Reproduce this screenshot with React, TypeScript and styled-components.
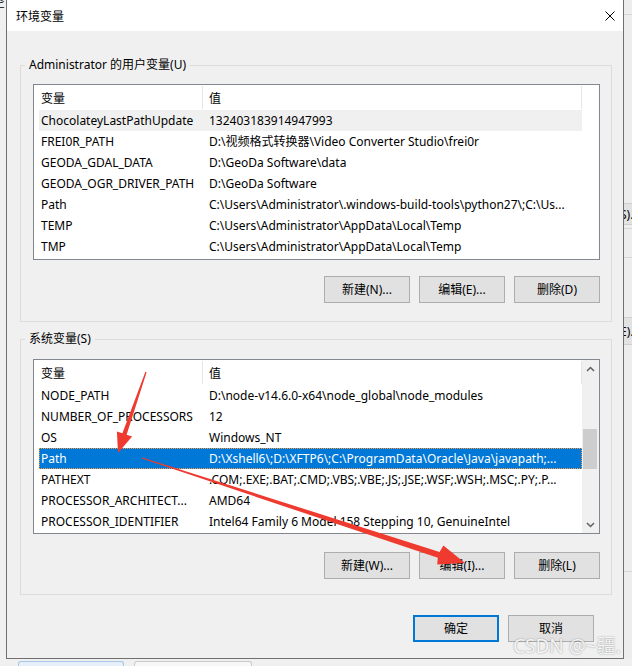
import React from 'react';
import styled, { createGlobalStyle, css } from 'styled-components';

const UI_FONT = `"Noto Sans", "Noto Sans CJK SC", sans-serif`;

const GlobalStyle = createGlobalStyle`
  html, body { margin: 0; padding: 0; background: #f0f0f0; }
  body { font-family: ${UI_FONT}; font-size: 12px; color: #000; }
  *, *::before, *::after { box-sizing: border-box; }
`;

const Screen = styled.div`
  position: relative;
  width: 632px;
  height: 666px;
  overflow: hidden;
  display: grid;
  grid-template-columns: 6px 618px 8px;
  grid-template-rows: 659px 7px;
  background: #f0f0f0;
`;

const LeftStrip = styled.div`
  grid-column: 1;
  grid-row: 1;
  overflow: hidden;
  background: #f0f0f0;
`;

const BgGlyph = styled.span`
  display: block;
  margin: -5px 0 0 -7px;
  font-size: 12px;
  line-height: 16px;
  color: #000;
`;

const RightStrip = styled.div`
  grid-column: 3;
  grid-row: 1;
  overflow: hidden;
  display: flex;
  flex-direction: column;
  background: #ededed;
`;

const BgFragment = styled.div<{ $mt: number; $h: number }>`
  margin-top: ${(p) => p.$mt}px;
  height: ${(p) => p.$h}px;
  flex: none;
  border-top: 1px solid #cfcfcf;
  border-bottom: 1px solid #cfcfcf;
  background: #e2e2e2;
  display: flex;
  align-items: center;
  white-space: nowrap;
  font-size: 12px;
  text-indent: -4px;
`;

const BgLine = styled.div<{ $mt: number }>`
  margin-top: ${(p) => p.$mt}px;
  height: 1px;
  flex: none;
  background: #d6d6d6;
`;

const BottomStrip = styled.div`
  grid-column: 1 / 4;
  grid-row: 2;
  display: flex;
  align-items: flex-end;
  gap: 10px;
  padding-left: 18px;
  background: #f0f0f0;
`;

const BgTab = styled.div<{ $w: number; $active?: boolean }>`
  width: ${(p) => p.$w}px;
  height: 5px;
  border: 1px solid ${(p) => (p.$active ? '#a8c6e4' : '#cacaca')};
  border-bottom: none;
  border-radius: 3px 3px 0 0;
  background: ${(p) => (p.$active ? '#e6f0fa' : '#f7f7f7')};
`;

const Dialog = styled.div`
  grid-column: 2;
  grid-row: 1;
  display: flex;
  flex-direction: column;
  border: 1px solid #707070;
  border-top: none;
  background: #f0f0f0;
`;

const TitleBar = styled.div`
  height: 31px;
  flex: none;
  background: #fff;
  display: flex;
  align-items: center;
  justify-content: space-between;
  padding: 0 8px 0 9px;
  font-size: 12px;
`;

const DialogBody = styled.div`
  flex: 1;
  display: flex;
  flex-direction: column;
  padding: 26px 11px 16px 13px;
`;

const GroupBox = styled.fieldset<{ $mt: number }>`
  margin: ${(p) => p.$mt}px 0 0 0;
  padding: 0;
  border: 1px solid #dcdcdc;
  min-width: 0;
`;

const GroupLegend = styled.legend`
  margin-left: 4px;
  padding: 0 4px;
  font-size: 12px;
  line-height: 16px;
  color: #000;
`;

const GroupInner = styled.div<{ $pt: number; $pb: number }>`
  padding: ${(p) => p.$pt}px 11px ${(p) => p.$pb}px 12px;
  display: flex;
  flex-direction: column;
`;

const ListView = styled.div<{ $h: number }>`
  height: ${(p) => p.$h}px;
  flex: none;
  border: 1px solid #828790;
  background: #fff;
  display: flex;
  overflow: hidden;
`;

const ListContent = styled.div`
  flex: 1;
  min-width: 0;
  display: flex;
  flex-direction: column;
`;

const HeaderRow = styled.div`
  display: flex;
  height: 25px;
  flex: none;
`;

const HeaderCell = styled.div<{ $w: number; $pl: number }>`
  width: ${(p) => p.$w}px;
  padding-left: ${(p) => p.$pl}px;
  display: flex;
  align-items: center;
  border-right: 1px solid #e5e5e5;
  margin: 1px 0;
  white-space: nowrap;
`;

type RowState = 'normal' | 'inactive' | 'selected';

const Row = styled.div<{ $state: RowState }>`
  display: grid;
  grid-template-columns: 164px 379px;
  width: 543px;
  height: 21px;
  flex: none;
  margin-left: 5px;
  align-items: center;
  ${(p) =>
    p.$state === 'inactive' &&
    css`
      background: #f0f0f0;
    `}
  ${(p) =>
    p.$state === 'selected' &&
    css`
      background: #0078d7;
      color: #fff;
      outline: 1px dotted #ff9a3c;
      outline-offset: -1px;
    `}
`;

const Cell = styled.div<{ $pl: number }>`
  padding-left: ${(p) => p.$pl}px;
  white-space: nowrap;
  overflow: hidden;
  line-height: 16px;
`;

const VScroll = styled.div`
  width: 17px;
  flex: none;
  background: #f0f0f0;
  display: flex;
  flex-direction: column;
`;

const ScrollArrow = styled.div`
  height: 17px;
  flex: none;
  display: flex;
  align-items: center;
  justify-content: center;
`;

const ScrollTrack = styled.div`
  flex: 1;
  display: flex;
  flex-direction: column;
  padding: 0 2px 0 1px;
`;

const ScrollThumb = styled.div`
  flex: none;
  background: #cdcdcd;
`;

const ButtonRow = styled.div<{ $mt: number; $pr?: number }>`
  display: flex;
  justify-content: flex-end;
  gap: 9px;
  margin-top: ${(p) => p.$mt}px;
  padding-right: ${(p) => p.$pr ?? 0}px;
`;

const PushButton = styled.button<{ $default?: boolean }>`
  width: 86px;
  height: 27px;
  padding: 0;
  margin: 0;
  font-family: ${UI_FONT};
  font-size: 12px;
  line-height: 16px;
  color: #000;
  background: #e1e1e1;
  border: 1px solid #adadad;
  border-radius: 0;
  ${(p) =>
    p.$default &&
    css`
      border: 2px solid #0078d7;
    `}
`;

const Annotations = styled.svg`
  position: absolute;
  left: 0;
  top: 0;
  width: 632px;
  height: 666px;
  pointer-events: none;
`;

const Watermark = styled.div`
  position: absolute;
  left: 513px;
  top: 634px;
  font-family: ${UI_FONT};
  font-size: 19px;
  line-height: 24px;
  white-space: nowrap;
  color: rgba(255, 255, 255, 0.92);
  text-shadow: 0 0 1.5px rgba(70, 70, 70, 0.65);
  pointer-events: none;
`;

type Item = { name: string; value: string; state?: RowState };

const userVars: Item[] = [
  { name: 'ChocolateyLastPathUpdate', value: '132403183914947993', state: 'inactive' },
  { name: 'FREI0R_PATH', value: String.raw`D:\视频格式转换器\Video Converter Studio\frei0r` },
  { name: 'GEODA_GDAL_DATA', value: String.raw`D:\GeoDa Software\data` },
  { name: 'GEODA_OGR_DRIVER_PATH', value: String.raw`D:\GeoDa Software` },
  { name: 'Path', value: String.raw`C:\Users\Administrator\.windows-build-tools\python27\;C:\Us...` },
  { name: 'TEMP', value: String.raw`C:\Users\Administrator\AppData\Local\Temp` },
  { name: 'TMP', value: String.raw`C:\Users\Administrator\AppData\Local\Temp` },
];

const systemVars: Item[] = [
  { name: 'NODE_PATH', value: String.raw`D:\node-v14.6.0-x64\node_global\node_modules` },
  { name: 'NUMBER_OF_PROCESSORS', value: '12' },
  { name: 'OS', value: 'Windows_NT' },
  { name: 'Path', value: String.raw`D:\Xshell6\;D:\XFTP6\;C:\ProgramData\Oracle\Java\javapath;...`, state: 'selected' },
  { name: 'PATHEXT', value: '.COM;.EXE;.BAT;.CMD;.VBS;.VBE;.JS;.JSE;.WSF;.WSH;.MSC;.PY;.P...' },
  { name: 'PROCESSOR_ARCHITECT...', value: 'AMD64' },
  { name: 'PROCESSOR_IDENTIFIER', value: 'Intel64 Family 6 Model 158 Stepping 10, GenuineIntel' },
];

const Chevron = ({ up }: { up: boolean }) => (
  <svg width="9" height="6" viewBox="0 0 9 6">
    <path
      d={up ? 'M1 5 L4.5 1.5 L8 5' : 'M1 1 L4.5 4.5 L8 1'}
      fill="none"
      stroke="#606060"
      strokeWidth="1.5"
    />
  </svg>
);

const CloseIcon = () => (
  <svg width="10" height="10" viewBox="0 0 10 10">
    <path d="M0.5 0.5 L9.5 9.5 M9.5 0.5 L0.5 9.5" stroke="#000" strokeWidth="1" fill="none" />
  </svg>
);

const VarList = ({
  items,
  height,
  scroll,
}: {
  items: Item[];
  height: number;
  scroll?: { top: number; size: number };
}) => (
  <ListView $h={height}>
    <ListContent>
      <HeaderRow>
        <HeaderCell $w={169} $pl={7}>变量</HeaderCell>
        <HeaderCell $w={379} $pl={6}>值</HeaderCell>
      </HeaderRow>
      {items.map((it, i) => (
        <Row key={i} $state={it.state ?? 'normal'}>
          <Cell $pl={2}>{it.name}</Cell>
          <Cell $pl={6}>{it.value}</Cell>
        </Row>
      ))}
    </ListContent>
    {scroll && (
      <VScroll>
        <ScrollArrow>
          <Chevron up />
        </ScrollArrow>
        <ScrollTrack>
          <ScrollThumb style={{ marginTop: scroll.top, height: scroll.size }} />
        </ScrollTrack>
        <ScrollArrow>
          <Chevron up={false} />
        </ScrollArrow>
      </VScroll>
    )}
  </ListView>
);

export default function App() {
  return (
    <>
      <GlobalStyle />
      <Screen>
        <LeftStrip>
          <BgGlyph>空</BgGlyph>
        </LeftStrip>

        <Dialog>
          <TitleBar>
            <span>环境变量</span>
            <CloseIcon />
          </TitleBar>
          <DialogBody>
            <GroupBox $mt={0}>
              <GroupLegend>Administrator 的用户变量(U)</GroupLegend>
              <GroupInner $pt={11} $pb={18}>
                <VarList items={userVars} height={176} />
                <ButtonRow $mt={16}>
                  <PushButton>新建(N)...</PushButton>
                  <PushButton>编辑(E)...</PushButton>
                  <PushButton>删除(D)</PushButton>
                </ButtonRow>
              </GroupInner>
            </GroupBox>

            <GroupBox $mt={9}>
              <GroupLegend>系统变量(S)</GroupLegend>
              <GroupInner $pt={12} $pb={15}>
                <VarList items={systemVars} height={175} scroll={{ top: 52, size: 40 }} />
                <ButtonRow $mt={18}>
                  <PushButton>新建(W)...</PushButton>
                  <PushButton>编辑(I)...</PushButton>
                  <PushButton>删除(L)</PushButton>
                </ButtonRow>
              </GroupInner>
            </GroupBox>

            <ButtonRow $mt={20} $pr={18}>
              <PushButton $default>确定</PushButton>
              <PushButton>取消</PushButton>
            </ButtonRow>
          </DialogBody>
        </Dialog>

        <RightStrip>
          <BgLine $mt={14} />
          <BgFragment $mt={188} $h={22}>S).</BgFragment>
          <BgLine $mt={3} />
          <BgLine $mt={28} />
          <BgFragment $mt={59} $h={28}>E).</BgFragment>
          <BgLine $mt={226} />
        </RightStrip>

        <BottomStrip>
          <BgTab $w={106} $active />
          <BgTab $w={118} />
        </BottomStrip>

        <Annotations viewBox="0 0 632 666">
          <polygon
            fill="#ef3b2f"
            points="145.4,371.8 122.4,433.3 116.9,431.4 118,453 132.1,436.6 126.6,434.7 146.6,372.2"
          />
          <polygon
            fill="#ef3b2f"
            points="142.2,457.4 439.6,552.0 443.4,545.4 465,563 437.2,564.4 437.8,557.8 141.8,458.6"
          />
        </Annotations>
        <Watermark>CSDN @~疆.</Watermark>
      </Screen>
    </>
  );
}
